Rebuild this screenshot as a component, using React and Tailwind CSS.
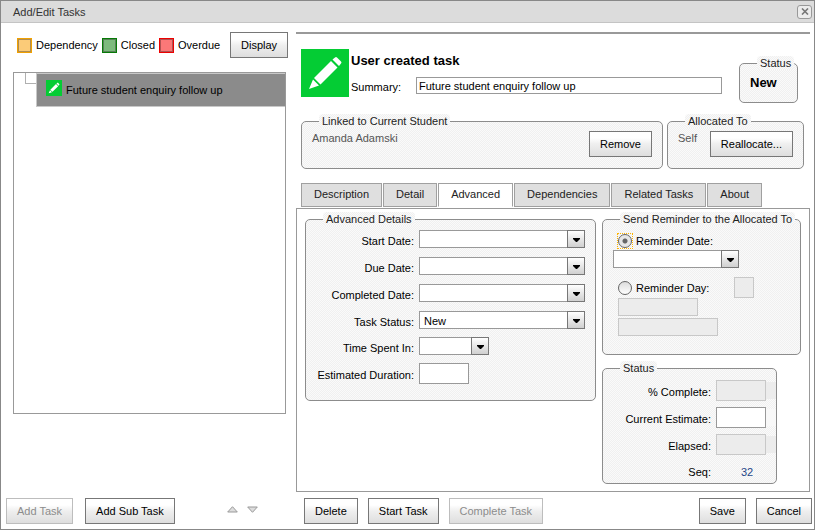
import React from "react";

const DITHER =
  "bg-[repeating-conic-gradient(#f0f0f0_0_25%,#fafafa_0_50%)] bg-[length:2px_2px]";

function Button({ children, disabled = false, className = "" }) {
  const tone = disabled
    ? "border-[#bdbdbd] text-[#8c8c8c]"
    : "border-[#777] text-black";
  return (
    <button
      type="button"
      disabled={disabled}
      className={`h-[26px] shrink-0 whitespace-nowrap border bg-linear-to-b from-white from-25% via-[#efefef] via-50% to-[#dedede] px-[10px] ${tone} ${className}`}
    >
      {children}
    </button>
  );
}

function Group({ title, className = "", children }) {
  return (
    <fieldset
      className={`min-w-0 rounded-[5px] border border-[#8c8c8c] ${DITHER} ${className}`}
    >
      <legend
        className={`ml-[17px] rounded px-[3px] leading-[14px] text-[#222] ${DITHER}`}
      >
        {title}
      </legend>
      {children}
    </fieldset>
  );
}

function Combo({ id, label, value = "", className = "" }) {
  return (
    <div className={`relative h-[18px] ${className}`}>
      <select
        id={id}
        aria-label={label}
        defaultValue={value}
        className="block h-full w-full appearance-none border border-[#999] bg-white pl-1 pr-5 pt-px leading-[16px] text-black"
      >
        <option value={value}>{value}</option>
      </select>
      <span className="pointer-events-none absolute inset-y-0 right-0 flex w-[18px] items-center justify-center border border-[#777] bg-linear-to-b from-white to-[#d0d0d0]">
        <svg width="7" height="4" viewBox="0 0 7 4" className="mt-[2px]">
          <path d="M0 0H7V1L4 4H3L0 1Z" fill="#000" />
        </svg>
      </span>
    </div>
  );
}

function Field({ id, label, children }) {
  return (
    <div className="flex h-[18px] items-center gap-[5px]">
      <label htmlFor={id} className="w-[108px] shrink-0 whitespace-nowrap pt-1 text-right">
        {label}
      </label>
      {children}
    </div>
  );
}

function Key({ label, className }) {
  return (
    <div className="flex items-center gap-1">
      <span className={`h-[15px] w-[15px] border ${className}`}>
        <span className="block h-full w-full border border-black/30" />
      </span>
      <span>{label}</span>
    </div>
  );
}

function Pencil({ className }) {
  return (
    <svg viewBox="0 0 48 48" className={`shrink-0 bg-[#04cc34] ${className}`}>
      <path
        fill="#fff"
        d="M8 40L12 30.500L18 36.500ZM13 29L30 12L36.500 18.500L19.500 35.500ZM31.500 10.500L34 8.500Q35 7.500 36 8.500L40 12.500Q41 13.500 40 14.500L38 17Z"
      />
    </svg>
  );
}

function Radio({ id, defaultChecked = false }) {
  return (
    <span className="flex has-checked:outline-1 has-checked:outline-dotted has-checked:outline-[#ffb400]">
      <input
        id={id}
        type="radio"
        name="reminder"
        defaultChecked={defaultChecked}
        className="h-[14px] w-[14px] shrink-0 appearance-none rounded-full border border-[#666] bg-linear-to-b from-[#dcdcdc] to-white checked:bg-[radial-gradient(circle,#666_2px,#e6e6e6_3px)]"
      />
    </span>
  );
}

function Tab({ children, active = false }) {
  const tone = active
    ? "relative z-10 border-b-white bg-white"
    : "border-b-[#a0a0a0] bg-[#dfdfdf]";
  return (
    <button
      type="button"
      role="tab"
      aria-selected={active}
      className={`whitespace-nowrap border border-[#a0a0a0] px-3 pb-[2px] text-[#222] ${tone}`}
    >
      {children}
    </button>
  );
}

function SmallInput({ id, label, disabled = false, className }) {
  const tone = disabled
    ? "border-[#c8c8c8] bg-[#ececec]"
    : "border-[#999] bg-white";
  return (
    <input
      id={id}
      aria-label={label}
      type="text"
      disabled={disabled}
      className={`block shrink-0 border px-1 ${tone} ${className}`}
    />
  );
}

function StatusRow({ id, label, disabled }) {
  return (
    <div className="flex items-center gap-[5px]">
      <label htmlFor={id} className="flex-1 whitespace-nowrap pt-[2px] text-right">
        {label}
      </label>
      <div className="flex w-[60px] items-center">
        <SmallInput id={id} disabled={disabled} className="h-[21px] w-[50px]" />
        <span className={`h-[17px] flex-1 ${disabled ? "bg-[#ececec]" : "bg-[#f8f8f8]"}`} />
      </div>
    </div>
  );
}

export default function App() {
  return (
    <div className="flex min-h-screen flex-col border border-[#888] bg-white font-['Liberation_Sans',Arial,sans-serif] text-[11px] leading-[14px] text-black">
      <header className="flex h-[22px] items-center justify-between border-b border-[#c4c4c4] bg-[#dcdcdc] pl-3 pr-[2px]">
        <h1 className="text-[#333]">Add/Edit Tasks</h1>
        <button
          type="button"
          aria-label="Close"
          className="flex h-[14px] w-[15px] items-center justify-center rounded-[3px] border border-[#999] bg-[#ececec]"
        >
          <svg width="8" height="7" viewBox="0 0 8 7" stroke="#777" strokeWidth="1.600">
            <path d="M1 .5L7 6.500M7 .5L1 6.500" />
          </svg>
        </button>
      </header>

      <div className="flex flex-1">
        <aside className="flex w-[295px] shrink-0 flex-col pb-[5px] pt-[9px]">
          <div className="flex items-center pl-4">
            <div className="flex flex-1 gap-1">
              <Key label="Dependency" className="border-[#f0a000] bg-[#fbcb78]" />
              <Key label="Closed" className="border-[#067a06] bg-[#7dba7d]" />
              <Key label="Overdue" className="border-[#ee0000] bg-[#fb7878]" />
            </div>
            <Button className="mr-2 w-[58px]">Display</Button>
          </div>

          <div className="ml-3 mr-[10px] mt-[14px] flex h-[342px] items-start border border-[#999]">
            <span className="ml-[11px] h-[11px] w-[11px] border-b border-l border-[#b0b0b0]" />
            <div className="flex h-[34px] flex-1 items-center gap-1 border border-r-0 border-[#c8c8c8] bg-[#8b8b8b] pl-[9px]">
              <Pencil className="-mt-1 h-4 w-4" />
              <span>Future student enquiry follow up</span>
            </div>
          </div>

          <div className="mt-auto flex items-center gap-3 pl-[5px]">
            <Button disabled>Add Task</Button>
            <Button>Add Sub Task</Button>
            <div className="ml-10 flex gap-[9px] pb-1">
              <button type="button" aria-label="Move up">
                <svg width="11" height="7" viewBox="0 0 11 7">
                  <path d="M5.500 .7L10.300 6H.7Z" fill="#ddd" stroke="#999" />
                </svg>
              </button>
              <button type="button" aria-label="Move down">
                <svg width="11" height="7" viewBox="0 0 11 7">
                  <path d="M5.500 6.300L.7 1H10.300Z" fill="#ddd" stroke="#999" />
                </svg>
              </button>
            </div>
          </div>
        </aside>

        <main className="flex min-w-0 flex-1 flex-col pb-[5px] pr-1 pt-[9px]">
          <hr className="border-t-2 border-[#999]" />

          <section className="flex pl-[5px] pr-3 pt-[15px]">
            <Pencil className="h-12 w-12" />
            <div className="min-w-0 flex-1 pl-[2px] pr-[17px]">
              <h2 className="pt-1 text-[13px] font-bold leading-4">User created task</h2>
              <div className="mt-[7px] flex items-center">
                <label htmlFor="summary" className="w-[65px] shrink-0 pt-1">
                  Summary:
                </label>
                <input
                  id="summary"
                  type="text"
                  defaultValue="Future student enquiry follow up"
                  className="h-[17px] min-w-0 flex-1 border border-[#999] bg-white pl-[2px] pt-[2px]"
                />
              </div>
            </div>
            <Group title="Status" className="mt-[7px] h-[47px] w-[59px]">
              <p className="pl-[10px] pt-[6px] text-[13px] font-bold">New</p>
            </Group>
          </section>

          <section className="mt-[11px] flex gap-1 pl-[5px] pr-[6px]">
            <Group title="Linked to Current Student" className="h-[55px] flex-1">
              <div className="flex items-start justify-between pl-[10px] pr-[10px]">
                <span className="pt-[3px] text-[#555]">Amanda Adamski</span>
                <Button className="mt-[3px]">Remove</Button>
              </div>
            </Group>
            <Group title="Allocated To" className="h-[55px] w-[137px]">
              <div className="flex items-start justify-between pl-[10px] pr-[10px]">
                <span className="pt-[3px] text-[#555]">Self</span>
                <Button className="mt-[3px]">Reallocate...</Button>
              </div>
            </Group>
          </section>

          <div role="tablist" className="mt-[14px] flex h-6 gap-px pl-[5px]">
            <Tab>Description</Tab>
            <Tab>Detail</Tab>
            <Tab active>Advanced</Tab>
            <Tab>Dependencies</Tab>
            <Tab>Related Tasks</Tab>
            <Tab>About</Tab>
          </div>

          <section className="mt-px flex flex-1 items-start gap-[6px] border border-[#999] px-2 pt-[3px]">
            <Group title="Advanced Details" className="h-[189px] flex-1">
              <div className="flex flex-col gap-[9px] pt-1">
                <Field id="start" label="Start Date:">
                  <Combo id="start" className="w-[166px]" />
                </Field>
                <Field id="due" label="Due Date:">
                  <Combo id="due" className="w-[166px]" />
                </Field>
                <Field id="completed" label="Completed Date:">
                  <Combo id="completed" className="w-[166px]" />
                </Field>
                <Field id="status" label="Task Status:">
                  <Combo id="status" value="New" className="w-[166px]" />
                </Field>
              </div>
              <div className="flex flex-col gap-[9px] pt-2">
                <Field id="spent" label="Time Spent In:">
                  <Combo id="spent" className="w-[70px]" />
                </Field>
                <Field id="duration" label="Estimated Duration:">
                  <SmallInput id="duration" className="h-[21px] w-[50px]" />
                </Field>
              </div>
            </Group>

            <div className="flex w-[199px] shrink-0 flex-col gap-[6px]">
              <Group title="Send Reminder to the Allocated To" className="h-[143px]">
                <div className="flex items-center gap-1 pl-[15px] pt-2">
                  <Radio id="by-date" defaultChecked />
                  <label htmlFor="by-date">Reminder Date:</label>
                </div>
                <Combo label="Reminder date" className="ml-[10px] mt-[2px] w-[126px]" />
                <div className="mt-[9px] flex items-center gap-1 pl-[15px] pr-[46px]">
                  <Radio id="by-day" />
                  <label htmlFor="by-day" className="flex-1">
                    Reminder Day:
                  </label>
                  <SmallInput label="Day" disabled className="h-[21px] w-5" />
                </div>
                <div className="flex flex-col gap-[2px] pl-[15px]">
                  <SmallInput label="Period" disabled className="h-[18px] w-20" />
                  <SmallInput label="Relative to" disabled className="h-[18px] w-[100px]" />
                </div>
              </Group>

              <Group title="Status" className="h-[123px] w-[175px]">
                <div className="flex flex-col gap-[6px] pt-[5px]">
                  <StatusRow id="percent" label="% Complete:" disabled />
                  <StatusRow id="estimate" label="Current Estimate:" />
                  <StatusRow id="elapsed" label="Elapsed:" disabled />
                  <div className="flex items-center gap-[5px] pt-1">
                    <span className="flex-1 text-right">Seq:</span>
                    <output className="w-[60px] pl-[25px] text-[#1f4788]">32</output>
                  </div>
                </div>
              </Group>
            </div>
          </section>

          <footer className="-mr-[2px] flex gap-[10px] pl-2 pt-[6px]">
            <Button>Delete</Button>
            <Button>Start Task</Button>
            <Button disabled>Complete Task</Button>
            <Button className="ml-auto">Save</Button>
            <Button>Cancel</Button>
          </footer>
        </main>
      </div>
    </div>
  );
}
